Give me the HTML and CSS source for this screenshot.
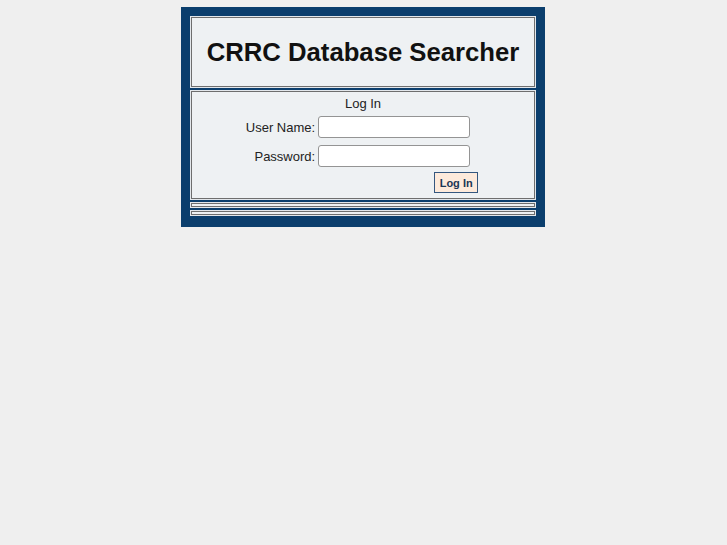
FILE: index.html
```html
<!DOCTYPE html>
<html lang="en">
<head>
<meta charset="utf-8">
<title>CRRC Database Searcher</title>
<link rel="stylesheet" href="styles.css">
</head>
<body>
<div class="frame">
  <div class="cell header">
    <h1 class="title">CRRC Database Searcher</h1>
  </div>
  <div class="cell login">
    <div class="login-title">Log In</div>
    <form class="login-form" action="#" onsubmit="return false;">
      <label class="label" for="user">User Name:</label>
      <input class="field" id="user" type="text">
      <label class="label" for="pass">Password:</label>
      <input class="field" id="pass" type="password">
      <button class="submit" type="submit">Log In</button>
    </form>
  </div>
  <div class="cell stripe"></div>
  <div class="cell stripe"></div>
</div>
</body>
</html>
```
FILE: styles.css
```css
html, body {
  margin: 0;
  padding: 0;
  background: #efefef;
}

body {
  font-family: "Liberation Sans", Arial, sans-serif;
  color: #222;
  padding-right: 1px;
}

/* dark blue frame around the whole panel */
.frame {
  width: 346px;
  margin: 7px auto 0;
  padding: 9px 9px 11px 9px;
  background: #0b3e6d;
  display: flex;
  flex-direction: column;
  gap: 2px;
}

/* bevelled table-style cells: light outer line, grey inner line */
.cell {
  background: #eef1f3;
  border: 1px solid #e3e7eb;
  box-shadow: inset 0 0 0 1px #6e6e6e;
  box-sizing: border-box;
}

.header {
  height: 72px;
  display: flex;
  align-items: center;
  justify-content: center;
}

.title {
  margin: 0;
  font-size: 25.7px;
  font-weight: bold;
  color: #111;
  padding-top: 1px;
}

.login {
  height: 110px;
  padding: 5px 2px 0;
}

.login-title {
  text-align: center;
  font-size: 13px;
  line-height: 15px;
  color: #222;
}

.login-form {
  display: grid;
  grid-template-columns: auto 160px;
  column-gap: 3px;
  row-gap: 7px;
  width: max-content;
  margin: 5px auto 0;
  padding-right: 2px;
}

.label {
  font-size: 13px;
  text-align: right;
  align-self: center;
  color: #222;
}

.field {
  width: 152px;
  height: 22px;
  box-sizing: border-box;
  margin: 0;
  border: 1px solid #949494;
  border-radius: 3px;
  background: #fff;
  padding: 0 3px;
}

.submit {
  grid-column: 2;
  justify-self: end;
  width: 44px;
  height: 21px;
  margin: -2px 0 0;
  padding: 0;
  box-sizing: border-box;
  background: #fdeadb;
  border: 1px solid #34577f;
  font-family: "Liberation Sans", Arial, sans-serif;
  font-size: 11px;
  font-weight: bold;
  color: #1b3655;
}

.stripe {
  height: 6px;
}
```
